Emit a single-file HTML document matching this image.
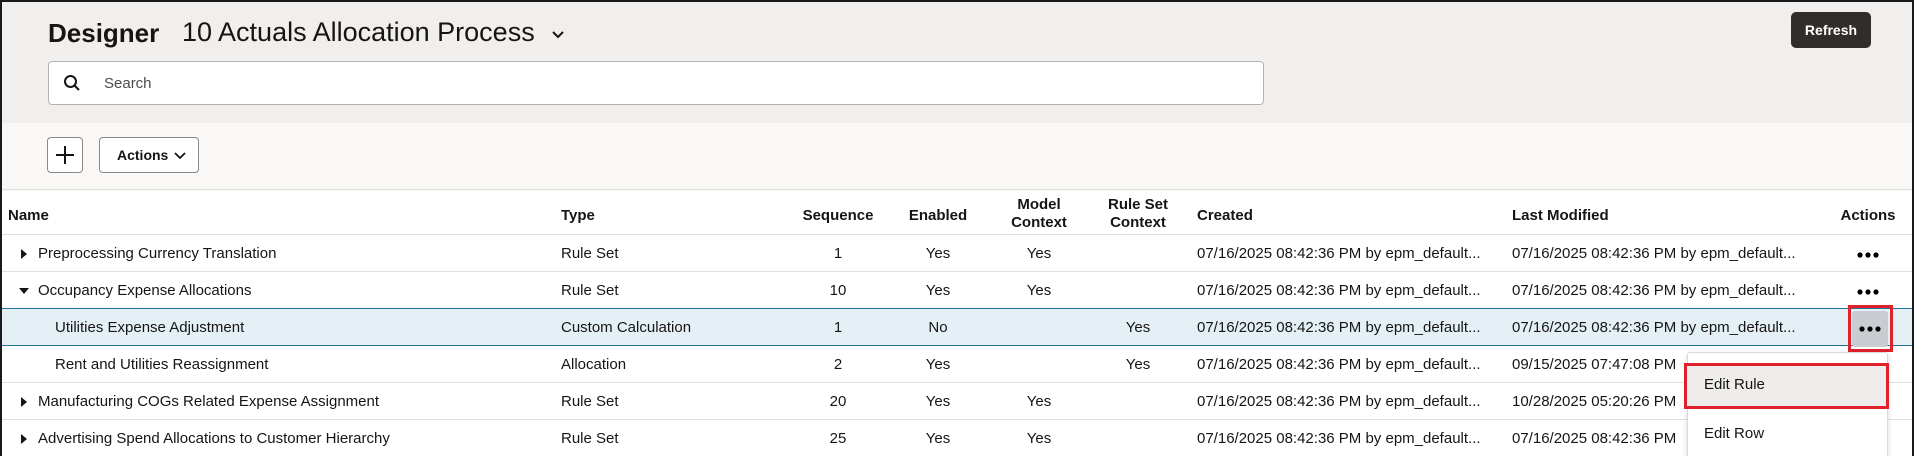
<!DOCTYPE html>
<html><head><meta charset="utf-8"><style>
*{box-sizing:border-box;margin:0;padding:0}
body{width:1918px;height:456px;background:#fff;font-family:"Liberation Sans",sans-serif;color:#161513;position:relative;overflow:hidden}
.frame{position:absolute;left:0;top:0;width:1914px;height:456px;border:2px solid #1a1a1a;border-bottom:none;overflow:hidden}
.hdr{position:absolute;left:0;top:0;width:100%;height:121px;background:#f1efed}
.tb{position:absolute;left:0;top:121px;width:100%;height:68px;background:#f9f8f6}
.a{position:absolute;white-space:nowrap}
.btn{position:absolute;border:1px solid #8a8784;border-radius:4px;background:#fff}
.row{position:absolute;left:0;width:100%;height:37px;border-bottom:1px solid #e2e0dd}
.t{position:absolute;font-size:15px;line-height:37px;white-space:nowrap}
.c{transform:translateX(-50%)}
.th{position:absolute;font-size:15px;font-weight:bold;line-height:18px;text-align:center;white-space:nowrap}
.tri{position:absolute;width:0;height:0}
.dots{position:absolute;width:22px;height:6px}
</style></head><body>
<div class="frame">
<div class="hdr"></div>
<div class="a" style="left:46px;top:16px;font-size:26px;font-weight:bold">Designer</div>
<div class="a" style="left:180px;top:15px;font-size:27px">10 Actuals Allocation Process</div>
<svg class="a" style="left:549px;top:28px" width="14" height="10"><path d="M2 2 L7 7 L12 2" stroke="#161513" stroke-width="2" fill="none"/></svg>
<div class="a" style="left:1789px;top:10px;width:80px;height:36px;background:#312d2a;border-radius:5px;color:#fff;font-size:14px;font-weight:bold;text-align:center;line-height:36px">Refresh</div>
<div class="a" style="left:46px;top:59px;width:1216px;height:44px;background:#fff;border:1px solid #b5b3b0;border-radius:4px"></div>
<svg class="a" style="left:61px;top:72px" width="18" height="18"><circle cx="7.5" cy="7.5" r="5.5" stroke="#161513" stroke-width="2" fill="none"/><path d="M11.5 11.5 L16 16" stroke="#161513" stroke-width="2"/></svg>
<div class="a" style="left:102px;top:73px;font-size:15px;color:#4d4b49">Search</div>
<div class="tb"></div>
<div class="btn" style="left:45px;top:135px;width:36px;height:36px"></div>
<svg class="a" style="left:53px;top:143px" width="20" height="20"><path d="M10 1 V19 M1 10 H19" stroke="#161513" stroke-width="2"/></svg>
<div class="btn" style="left:97px;top:135px;width:100px;height:36px"></div>
<div class="a" style="left:115px;top:145px;font-size:14px;font-weight:bold">Actions</div>
<svg class="a" style="left:172px;top:150px" width="12" height="8"><path d="M1 1 L6 6 L11 1" stroke="#161513" stroke-width="1.8" fill="none"/></svg>

<div class="row" style="top:187px;height:46px;border-top:1px solid #e2e0dd"></div>
<div class="th" style="left:6px;top:205px">Name</div>
<div class="th" style="left:559px;top:205px">Type</div>
<div class="th c" style="left:836px;top:205px">Sequence</div>
<div class="th c" style="left:936px;top:205px">Enabled</div>
<div class="th c" style="left:1037px;top:194px">Model<br>Context</div>
<div class="th c" style="left:1136px;top:194px">Rule Set<br>Context</div>
<div class="th" style="left:1195px;top:205px">Created</div>
<div class="th" style="left:1510px;top:205px">Last Modified</div>
<div class="th c" style="left:1866px;top:205px">Actions</div>

<div class="row" style="top:233px"></div>
<div class="row" style="top:270px"></div>
<div class="row" style="background:#e4f0f6;border-top:1px solid #23739a;border-bottom:1px solid #23739a;height:38px;top:306px"></div>
<div class="row" style="top:344px"></div>
<div class="row" style="top:381px"></div>
<div class="row" style="top:418px"></div>

<div class="tri" style="left:19px;top:247px;border-left:6px solid #161513;border-top:5px solid transparent;border-bottom:5px solid transparent"></div>
<div class="t" style="left:36px;top:233px">Preprocessing Currency Translation</div>
<div class="t" style="left:559px;top:233px">Rule Set</div>
<div class="t c" style="left:836px;top:233px">1</div>
<div class="t c" style="left:936px;top:233px">Yes</div>
<div class="t c" style="left:1037px;top:233px">Yes</div>
<div class="t" style="left:1195px;top:233px">07/16/2025 08:42:36 PM by epm_default...</div>
<div class="t" style="left:1510px;top:233px">07/16/2025 08:42:36 PM by epm_default...</div>
<svg class="dots" style="left:1855px;top:250px"><circle cx="3" cy="3" r="2.6"/><circle cx="11" cy="3" r="2.6"/><circle cx="19" cy="3" r="2.6"/></svg>

<div class="tri" style="left:17px;top:286px;border-top:6px solid #161513;border-left:5px solid transparent;border-right:5px solid transparent"></div>
<div class="t" style="left:36px;top:270px">Occupancy Expense Allocations</div>
<div class="t" style="left:559px;top:270px">Rule Set</div>
<div class="t c" style="left:836px;top:270px">10</div>
<div class="t c" style="left:936px;top:270px">Yes</div>
<div class="t c" style="left:1037px;top:270px">Yes</div>
<div class="t" style="left:1195px;top:270px">07/16/2025 08:42:36 PM by epm_default...</div>
<div class="t" style="left:1510px;top:270px">07/16/2025 08:42:36 PM by epm_default...</div>
<svg class="dots" style="left:1855px;top:287px"><circle cx="3" cy="3" r="2.6"/><circle cx="11" cy="3" r="2.6"/><circle cx="19" cy="3" r="2.6"/></svg>

<div class="t" style="left:53px;top:307px">Utilities Expense Adjustment</div>
<div class="t" style="left:559px;top:307px">Custom Calculation</div>
<div class="t c" style="left:836px;top:307px">1</div>
<div class="t c" style="left:936px;top:307px">No</div>
<div class="t c" style="left:1136px;top:307px">Yes</div>
<div class="t" style="left:1195px;top:307px">07/16/2025 08:42:36 PM by epm_default...</div>
<div class="t" style="left:1510px;top:307px">07/16/2025 08:42:36 PM by epm_default...</div>
<div class="a" style="left:1850px;top:309px;width:36px;height:36px;background:#c9cdd1;border-radius:3px"></div>
<div class="a" style="left:1846px;top:303px;width:45px;height:47px;border:3px solid #e0202a"></div>
<svg class="dots" style="left:1857px;top:324px"><circle cx="3" cy="3" r="2.6"/><circle cx="11" cy="3" r="2.6"/><circle cx="19" cy="3" r="2.6"/></svg>

<div class="t" style="left:53px;top:344px">Rent and Utilities Reassignment</div>
<div class="t" style="left:559px;top:344px">Allocation</div>
<div class="t c" style="left:836px;top:344px">2</div>
<div class="t c" style="left:936px;top:344px">Yes</div>
<div class="t c" style="left:1136px;top:344px">Yes</div>
<div class="t" style="left:1195px;top:344px">07/16/2025 08:42:36 PM by epm_default...</div>
<div class="t" style="left:1510px;top:344px">09/15/2025 07:47:08 PM</div>

<div class="tri" style="left:19px;top:395px;border-left:6px solid #161513;border-top:5px solid transparent;border-bottom:5px solid transparent"></div>
<div class="t" style="left:36px;top:381px">Manufacturing COGs Related Expense Assignment</div>
<div class="t" style="left:559px;top:381px">Rule Set</div>
<div class="t c" style="left:836px;top:381px">20</div>
<div class="t c" style="left:936px;top:381px">Yes</div>
<div class="t c" style="left:1037px;top:381px">Yes</div>
<div class="t" style="left:1195px;top:381px">07/16/2025 08:42:36 PM by epm_default...</div>
<div class="t" style="left:1510px;top:381px">10/28/2025 05:20:26 PM</div>

<div class="tri" style="left:19px;top:432px;border-left:6px solid #161513;border-top:5px solid transparent;border-bottom:5px solid transparent"></div>
<div class="t" style="left:36px;top:418px">Advertising Spend Allocations to Customer Hierarchy</div>
<div class="t" style="left:559px;top:418px">Rule Set</div>
<div class="t c" style="left:836px;top:418px">25</div>
<div class="t c" style="left:936px;top:418px">Yes</div>
<div class="t c" style="left:1037px;top:418px">Yes</div>
<div class="t" style="left:1195px;top:418px">07/16/2025 08:42:36 PM by epm_default...</div>
<div class="t" style="left:1510px;top:418px">07/16/2025 08:42:36 PM</div>

<div class="a" style="left:1685px;top:350px;width:201px;height:110px;background:#fff;border:1px solid #dcdad7;border-radius:3px;box-shadow:0 2px 6px rgba(0,0,0,0.15)"></div>
<div class="a" style="left:1682px;top:361px;width:205px;height:46px;background:#efedeb;border:3px solid #e0202a"></div>
<div class="a" style="left:1702px;top:374px;font-size:15px">Edit Rule</div>
<div class="a" style="left:1702px;top:423px;font-size:15px">Edit Row</div>
</div>
</body></html>
